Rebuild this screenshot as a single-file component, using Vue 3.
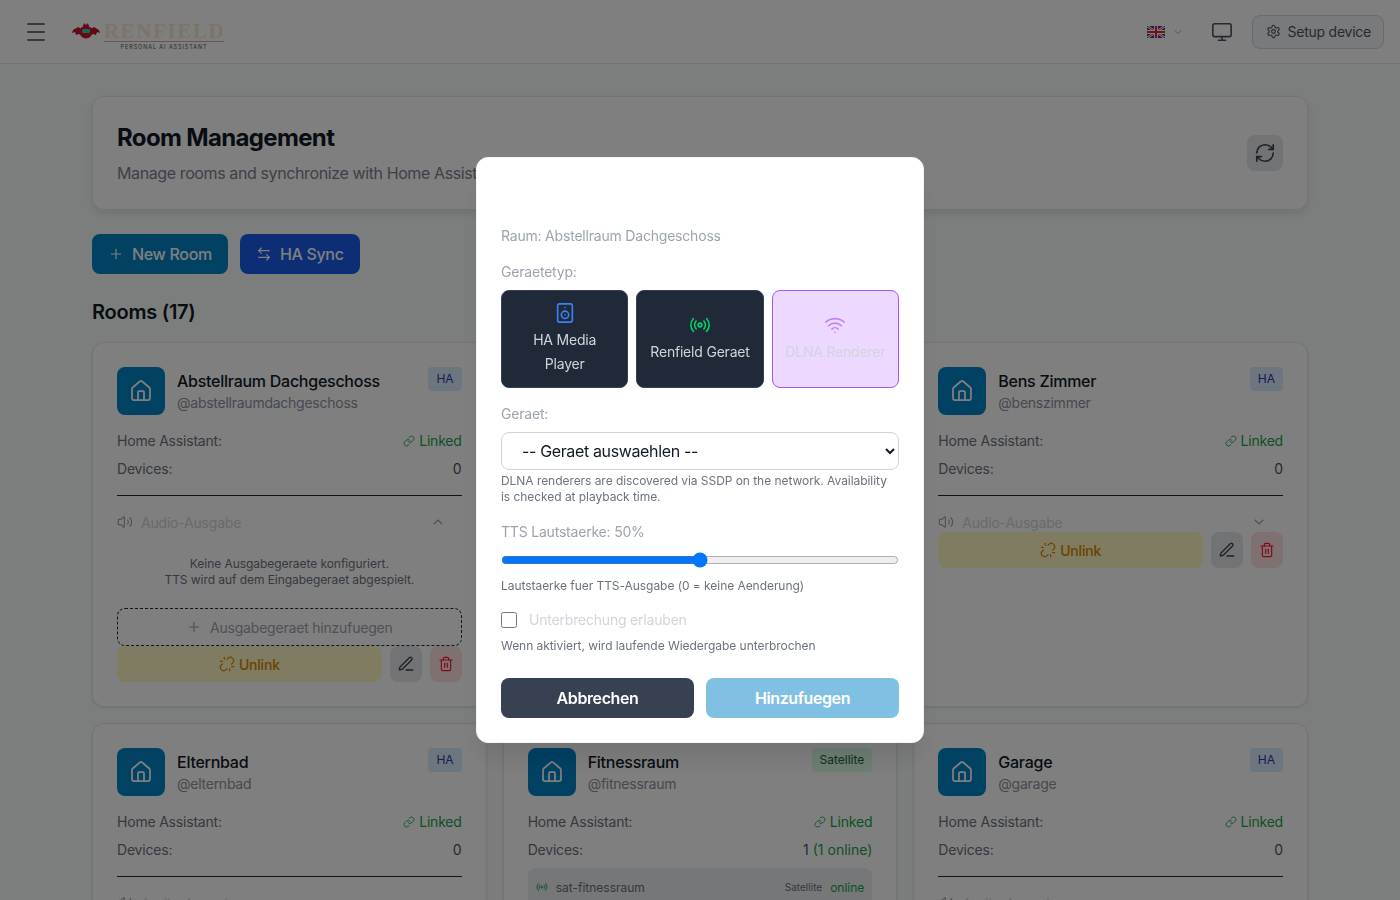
<template>
  <div class="page">
    <header class="topbar">
      <button class="menu-btn" title="Menu">
        <svg width="24" height="24" viewBox="0 0 24 24" fill="none" stroke="currentColor" stroke-width="2" stroke-linecap="round">
          <path d="M4 4h16M4 12h16M4 20h16" />
        </svg>
      </button>
      <div class="logo">
        <svg class="logo-bat" width="28" height="17" viewBox="0 0 28 17">
          <path d="M10 6 6 4 1 7l-1 3 3-1 1 3 3-1 2 1 3-2z" fill="#c0142c" />
          <path d="M18 6l4-2 5 3 1 3-3-1-1 3-3-1-2 1-3-2z" fill="#c0142c" />
          <circle cx="14" cy="9" r="6.5" fill="#d0142c" />
          <path d="M11 3l1-3 2 2 2-2 1 3z" fill="#d0142c" />
          <rect x="10" y="6" width="8" height="4" rx="1.5" fill="#22d3c5" />
        </svg>
        <div class="logo-text">
          <div class="logo-name">RENFIELD</div>
          <div class="logo-sub">PERSONAL AI ASSISTANT</div>
        </div>
      </div>
      <div class="topbar-right">
        <button class="lang-btn">
          <svg width="18" height="12" viewBox="0 0 18 12">
            <rect width="18" height="12" fill="#2a3f9e" />
            <path d="M0 0l18 12M18 0L0 12" stroke="#fff" stroke-width="2.4" />
            <path d="M0 0l18 12M18 0L0 12" stroke="#e0223c" stroke-width="0.9" />
            <path d="M9 0v12M0 6h18" stroke="#fff" stroke-width="4" />
            <path d="M9 0v12M0 6h18" stroke="#e0223c" stroke-width="2.2" />
          </svg>
          <Icon name="chevronDown" :size="12" class="lang-chevron" />
        </button>
        <button class="icon-plain"><Icon name="monitor" :size="22" /></button>
        <button class="setup-btn"><Icon name="settings" :size="15" /> <span>Setup device</span></button>
      </div>
    </header>

    <main class="content">
      <section class="title-card">
        <div>
          <h1>Room Management</h1>
          <p>Manage rooms and synchronize with Home Assistant</p>
        </div>
        <button class="refresh-btn"><Icon name="refresh" :size="22" /></button>
      </section>

      <div class="actions">
        <button class="action action-new"><Icon name="plus" :size="16" /> New Room</button>
        <button class="action action-sync"><Icon name="arrows" :size="16" /> HA Sync</button>
      </div>

      <h2 class="rooms-title">Rooms ({{ roomCount }})</h2>

      <div class="room-grid">
        <article v-for="room in rooms" :key="room.handle" class="room-card">
          <div class="room-head">
            <div class="room-tile"><Icon name="home" :size="24" /></div>
            <div class="room-name">
              <h3>{{ room.name }}</h3>
              <div class="room-handle">@{{ room.handle }}</div>
            </div>
            <span class="badge" :class="room.badge === 'HA' ? 'badge-ha' : 'badge-sat'">{{ room.badge }}</span>
          </div>

          <div class="info-row info-first">
            <span>Home Assistant:</span>
            <span class="linked"><Icon name="link" :size="12" /> Linked</span>
          </div>
          <div class="info-row">
            <span>Devices:</span>
            <span class="count">{{ room.devices }}<em v-if="room.online"> ({{ room.online }} online)</em></span>
          </div>

          <div v-if="room.satellite" class="device-row">
            <Icon name="radio" :size="12" class="device-icon" />
            <span class="device-name">{{ room.satellite }}</span>
            <span class="device-type">Satellite</span>
            <span class="device-state">online</span>
          </div>

          <div class="audio">
            <div class="audio-head">
              <Icon name="volume" :size="16" />
              <span>Audio-Ausgabe</span>
              <Icon :name="room.open ? 'chevronUp' : 'chevronDown'" :size="16" class="audio-chevron" />
            </div>
            <template v-if="room.open">
              <p class="audio-empty">Keine Ausgabegeraete konfiguriert.<br />TTS wird auf dem Eingabegeraet abgespielt.</p>
              <button class="audio-add"><Icon name="plus" :size="16" /> Ausgabegeraet hinzufuegen</button>
            </template>
          </div>

          <div class="room-actions">
            <button class="unlink-btn"><Icon name="unlink" :size="16" /> Unlink</button>
            <button class="square-btn edit-btn"><Icon name="pen" :size="18" /></button>
            <button class="square-btn delete-btn"><Icon name="trash" :size="16" /></button>
          </div>
        </article>
      </div>
    </main>

    <div class="overlay">
      <div class="dialog">
        <div class="dialog-top"></div>
        <p class="field-label room-line">Raum: Abstellraum Dachgeschoss</p>

        <p class="field-label">Geraetetyp:</p>
        <div class="type-grid">
          <button
            v-for="t in deviceTypes"
            :key="t.id"
            class="type-btn"
            :class="{ 'type-active': selectedType === t.id }"
            @click="selectedType = t.id"
          >
            <Icon :name="t.icon" :size="22" :class="t.tone" />
            <span>{{ t.label }}</span>
          </button>
        </div>

        <p class="field-label field-gap">Geraet:</p>
        <select class="device-select">
          <option>-- Geraet auswaehlen --</option>
        </select>
        <p class="help help-select">DLNA renderers are discovered via SSDP on the network. Availability is checked at playback time.</p>

        <p class="field-label volume-label">TTS Lautstaerke: {{ volume }}%</p>
        <input v-model="volume" class="volume" type="range" min="0" max="100" />
        <p class="help help-volume">Lautstaerke fuer TTS-Ausgabe (0 = keine Aenderung)</p>

        <label class="check-row">
          <input v-model="interrupt" type="checkbox" />
          <span>Unterbrechung erlauben</span>
        </label>
        <p class="help help-check">Wenn aktiviert, wird laufende Wiedergabe unterbrochen</p>

        <div class="dialog-actions">
          <button class="btn-cancel">Abbrechen</button>
          <button class="btn-add" disabled>Hinzufuegen</button>
        </div>
      </div>
    </div>
  </div>
</template>

<script setup>
import { h, ref } from 'vue'

const paths = {
  home: ['M15 21v-8a1 1 0 0 0-1-1h-4a1 1 0 0 0-1 1v8', 'M3 10a2 2 0 0 1 .709-1.528l7-6a2 2 0 0 1 2.582 0l7 6A2 2 0 0 1 21 10v9a2 2 0 0 1-2 2H5a2 2 0 0 1-2-2z'],
  plus: ['M5 12h14', 'M12 5v14'],
  arrows: ['M8 3 4 7l4 4', 'M4 7h16', 'm16 21 4-4-4-4', 'M20 17H4'],
  refresh: ['M3 12a9 9 0 0 1 9-9 9.75 9.75 0 0 1 6.74 2.74L21 8', 'M21 3v5h-5', 'M21 12a9 9 0 0 1-9 9 9.75 9.75 0 0 1-6.74-2.74L3 16', 'M8 16H3v5'],
  monitor: ['M4 3h16a2 2 0 0 1 2 2v10a2 2 0 0 1-2 2H4a2 2 0 0 1-2-2V5a2 2 0 0 1 2-2z', 'M8 21h8', 'M12 17v4'],
  settings: ['M12.22 2h-.44a2 2 0 0 0-2 2v.18a2 2 0 0 1-1 1.73l-.43.25a2 2 0 0 1-2 0l-.15-.08a2 2 0 0 0-2.73.73l-.22.38a2 2 0 0 0 .73 2.73l.15.1a2 2 0 0 1 1 1.72v.51a2 2 0 0 1-1 1.74l-.15.09a2 2 0 0 0-.73 2.73l.22.38a2 2 0 0 0 2.73.73l.15-.08a2 2 0 0 1 2 0l.43.25a2 2 0 0 1 1 1.73V20a2 2 0 0 0 2 2h.44a2 2 0 0 0 2-2v-.18a2 2 0 0 1 1-1.73l.43-.25a2 2 0 0 1 2 0l.15.08a2 2 0 0 0 2.73-.73l.22-.39a2 2 0 0 0-.73-2.73l-.15-.08a2 2 0 0 1-1-1.74v-.5a2 2 0 0 1 1-1.74l.15-.09a2 2 0 0 0 .73-2.73l-.22-.38a2 2 0 0 0-2.73-.73l-.15.08a2 2 0 0 1-2 0l-.43-.25a2 2 0 0 1-1-1.73V4a2 2 0 0 0-2-2z', 'M9 12a3 3 0 1 0 6 0a3 3 0 1 0-6 0'],
  chevronDown: ['m6 9 6 6 6-6'],
  chevronUp: ['m18 15-6-6-6 6'],
  link: ['M10 13a5 5 0 0 0 7.54.54l3-3a5 5 0 0 0-7.07-7.07l-1.72 1.71', 'M14 11a5 5 0 0 0-7.54-.54l-3 3a5 5 0 0 0 7.07 7.07l1.71-1.71'],
  unlink: ['m18.84 12.25 1.72-1.71h-.02a5.004 5.004 0 0 0-.12-7.07 5.006 5.006 0 0 0-6.95 0l-1.72 1.71', 'm5.17 11.75-1.71 1.71a5.004 5.004 0 0 0 .12 7.07 5.006 5.006 0 0 0 6.95 0l1.71-1.71', 'M8 2v3', 'M2 8h3', 'M16 19v3', 'M19 16h3'],
  volume: ['M11 4.702a.705.705 0 0 0-1.203-.498L6.413 7.587A1.4 1.4 0 0 1 5.416 8H3a1 1 0 0 0-1 1v6a1 1 0 0 0 1 1h2.416a1.4 1.4 0 0 1 .997.413l3.383 3.384A.705.705 0 0 0 11 19.298z', 'M16 9a5 5 0 0 1 0 6', 'M19.364 18.364a9 9 0 0 0 0-12.728'],
  pen: ['M12 20h9', 'M16.376 3.622a1 1 0 0 1 3.002 3.002L7.368 18.635a2 2 0 0 1-.855.506l-2.872.838a.5.5 0 0 1-.62-.62l.838-2.872a2 2 0 0 1 .506-.854z'],
  trash: ['M10 11v6', 'M14 11v6', 'M19 6v14a2 2 0 0 1-2 2H7a2 2 0 0 1-2-2V6', 'M3 6h18', 'M8 6V4a2 2 0 0 1 2-2h4a2 2 0 0 1 2 2v2'],
  speaker: ['M6 2h12a2 2 0 0 1 2 2v16a2 2 0 0 1-2 2H6a2 2 0 0 1-2-2V4a2 2 0 0 1 2-2z', 'M12 6h.01', 'M8 14a4 4 0 1 0 8 0a4 4 0 1 0-8 0', 'M12 14h.01'],
  radio: ['M4.9 19.1C1 15.2 1 8.8 4.9 4.9', 'M7.8 16.2c-2.3-2.3-2.3-6.1 0-8.5', 'M10 12a2 2 0 1 0 4 0a2 2 0 1 0-4 0', 'M16.2 7.8c2.3 2.3 2.3 6.1 0 8.5', 'M19.1 4.9C23 8.8 23 15.1 19.1 19'],
  wifi: ['M12 20h.01', 'M2 8.82a15 15 0 0 1 20 0', 'M5 12.859a10 10 0 0 1 14 0', 'M8.5 16.429a5 5 0 0 1 7 0']
}

// kleine Icon-Komponente, damit das Template lesbar bleibt
const Icon = (props) =>
  h(
    'svg',
    {
      width: props.size,
      height: props.size,
      viewBox: '0 0 24 24',
      fill: 'none',
      stroke: 'currentColor',
      'stroke-width': 1.75,
      'stroke-linecap': 'round',
      'stroke-linejoin': 'round'
    },
    paths[props.name].map((d) => h('path', { d }))
  )
Icon.props = ['name', 'size']

const roomCount = 17

const rooms = [
  { name: 'Abstellraum Dachgeschoss', handle: 'abstellraumdachgeschoss', badge: 'HA', devices: 0, open: true },
  { name: 'Arbeitszimmer', handle: 'arbeitszimmer', badge: 'HA', devices: 0 },
  { name: 'Bens Zimmer', handle: 'benszimmer', badge: 'HA', devices: 0 },
  { name: 'Elternbad', handle: 'elternbad', badge: 'HA', devices: 0 },
  { name: 'Fitnessraum', handle: 'fitnessraum', badge: 'Satellite', devices: 1, online: 1, satellite: 'sat-fitnessraum' },
  { name: 'Garage', handle: 'garage', badge: 'HA', devices: 0 }
]

const deviceTypes = [
  { id: 'ha', label: 'HA Media Player', icon: 'speaker', tone: 'tone-blue' },
  { id: 'renfield', label: 'Renfield Geraet', icon: 'radio', tone: 'tone-green' },
  { id: 'dlna', label: 'DLNA Renderer', icon: 'wifi', tone: 'tone-purple' }
]

const selectedType = ref('dlna')
const volume = ref(50)
const interrupt = ref(false)
</script>

<style scoped>
.page {
  min-height: 100vh;
  background: #f9fdfb;
  font-family: Inter, "Liberation Sans", sans-serif;
  color: #111827;
}

button {
  font-family: inherit;
  cursor: pointer;
  border: none;
  background: none;
}

p,
h1,
h2,
h3 {
  margin: 0;
}

/* Kopfzeile */
.topbar {
  height: 64px;
  box-sizing: border-box;
  display: flex;
  align-items: center;
  padding: 0 16px 0 24px;
  background: #fff;
  border-bottom: 1px solid #e5e7eb;
}

.menu-btn {
  width: 24px;
  height: 24px;
  padding: 0;
  color: #6b7280;
}

.logo {
  display: flex;
  align-items: center;
  margin-left: 24px;
}

.logo-text {
  margin-left: 4px;
  margin-top: 8px;
  width: 120px;
}

.logo-name {
  font-family: "Liberation Serif", serif;
  font-weight: 700;
  font-size: 21px;
  line-height: 20px;
  letter-spacing: 1.6px;
  color: #f6ebd2;
  border-bottom: 1.5px solid #d8a8a8;
  white-space: nowrap;
}

.logo-sub {
  font-size: 5.5px;
  line-height: 8px;
  letter-spacing: 0.9px;
  color: #4b5563;
  text-align: center;
  white-space: nowrap;
  margin-top: 1px;
}

.topbar-right {
  margin-left: auto;
  display: flex;
  align-items: center;
}

.lang-btn {
  display: flex;
  align-items: center;
  gap: 7px;
  padding: 0;
}

.lang-chevron {
  color: #9ca3af;
}

.icon-plain {
  margin-left: 27px;
  padding: 0;
  display: flex;
  color: #4b5563;
}

.setup-btn {
  margin-left: 19px;
  height: 34px;
  box-sizing: border-box;
  padding: 0 12px 0 13px;
  display: flex;
  align-items: center;
  gap: 7px;
  font-size: 14px;
  letter-spacing: -0.25px;
  color: #4b5563;
  background: #f3f4f6;
  border: 1px solid #d1d5db;
  border-radius: 8px;
}

/* Inhalt */
.content {
  width: 1216px;
  margin: 0 auto;
  padding-top: 32px;
}

.title-card {
  display: flex;
  align-items: center;
  justify-content: space-between;
  height: 114px;
  box-sizing: border-box;
  padding: 0 24px;
  background: #fff;
  border: 1px solid #e5e7eb;
  border-radius: 12px;
  box-shadow: 0 4px 10px rgba(0, 0, 0, 0.1);
}

.title-card h1 {
  font-size: 24px;
  line-height: 32px;
  font-weight: 700;
  letter-spacing: -0.65px;
  padding-top: 1px;
}

.title-card p {
  margin-top: 7px;
  font-size: 16px;
  line-height: 24px;
  letter-spacing: -0.39px;
  color: #7a8190;
  white-space: nowrap;
}

.refresh-btn {
  width: 36px;
  height: 36px;
  padding: 0;
  display: flex;
  align-items: center;
  justify-content: center;
  background: #e5e7eb;
  border-radius: 8px;
  color: #374151;
}

.actions {
  display: flex;
  gap: 12px;
  margin-top: 24px;
}

.action {
  height: 40px;
  padding: 0 16px;
  display: flex;
  align-items: center;
  gap: 8px;
  font-size: 16px;
  font-weight: 500;
  letter-spacing: -0.32px;
  color: #fff;
  border-radius: 8px;
}

.action-new {
  background: #0284c7;
}

.action-sync {
  background: #1a5ae8;
}

.rooms-title {
  margin-top: 24px;
  font-size: 20px;
  line-height: 28px;
  font-weight: 600;
  letter-spacing: -0.25px;
}

.room-grid {
  display: grid;
  grid-template-columns: repeat(3, 1fr);
  gap: 16px;
  margin-top: 16px;
}

.room-card {
  padding: 24px;
  background: #fff;
  border: 1px solid #e5e7eb;
  border-radius: 12px;
  box-shadow: 0 1px 3px rgba(0, 0, 0, 0.1);
}

.room-head {
  display: flex;
  align-items: center;
  gap: 12px;
}

.room-tile {
  width: 48px;
  height: 48px;
  flex: none;
  display: flex;
  align-items: center;
  justify-content: center;
  color: #fff;
  background: #0284c7;
  border-radius: 8px;
}

.room-name {
  flex: 1;
  min-width: 0;
}

.room-name h3 {
  font-size: 16px;
  line-height: 24px;
  font-weight: 500;
  letter-spacing: -0.26px;
}

.room-handle {
  font-size: 14px;
  line-height: 20px;
  letter-spacing: -0.25px;
  color: #8b92a0;
}

.badge {
  align-self: flex-start;
  height: 24px;
  padding: 0 8px;
  font-size: 12px;
  line-height: 24px;
  font-weight: 400;
  border-radius: 4px;
}

.badge-ha {
  background: #dbeafe;
  color: #1e40af;
}

.badge-sat {
  background: #dcfce7;
  color: #166534;
}

.info-row {
  display: flex;
  justify-content: space-between;
  margin-top: 8px;
  font-size: 14px;
  line-height: 20px;
  letter-spacing: -0.2px;
  color: #6b7280;
}

.info-first {
  margin-top: 16px;
}

.linked {
  display: flex;
  align-items: center;
  gap: 4px;
  color: #16a34a;
}

.count {
  color: #4b5563;
  letter-spacing: 0;
}

.count em {
  font-style: normal;
  color: #16a34a;
}

.device-row {
  display: flex;
  align-items: center;
  height: 38px;
  margin-top: 8px;
  padding: 0 8px;
  font-size: 12px;
  background: #eceef1;
  border-radius: 8px;
}

.device-icon {
  color: #16a34a;
}

.device-name {
  margin-left: 8px;
  flex: 1;
  color: #6b7280;
}

.device-type {
  font-size: 10px;
  color: #6b7280;
}

.device-state {
  margin-left: 8px;
  color: #16a34a;
}

.audio {
  margin-top: 16px;
  padding-top: 16px;
  border-top: 1px solid #1f2937;
}

.audio-head {
  display: flex;
  align-items: center;
  gap: 8px;
  height: 20px;
  font-size: 14px;
  letter-spacing: -0.2px;
  color: #d1d5db;
}

.audio-head svg {
  color: #9ca3af;
}

.audio-chevron {
  margin-left: auto;
  margin-right: 16px;
}

.audio-empty {
  padding: 24px 0 20px;
  font-size: 12px;
  line-height: 16px;
  letter-spacing: -0.06px;
  color: #6b7280;
  text-align: center;
}

.audio-add {
  width: 100%;
  height: 38px;
  display: flex;
  align-items: center;
  justify-content: center;
  gap: 8px;
  font-size: 14px;
  letter-spacing: -0.2px;
  color: #9ca3af;
  border: 1px dashed #1f2937;
  border-radius: 8px;
}

.room-actions {
  display: flex;
  gap: 8px;
}

.unlink-btn {
  flex: 1;
  height: 36px;
  display: flex;
  align-items: center;
  justify-content: center;
  gap: 4px;
  font-size: 14px;
  font-weight: 500;
  letter-spacing: -0.2px;
  color: #d98400;
  background: #fef9c3;
  border-radius: 8px;
}

.square-btn {
  width: 32px;
  height: 36px;
  padding: 0;
  display: flex;
  align-items: center;
  justify-content: center;
  border-radius: 8px;
}

.edit-btn {
  background: #e5e7eb;
  color: #374151;
}

.delete-btn {
  background: #fee2e2;
  color: #ff1230;
}

/* Dialog */
.overlay {
  position: fixed;
  inset: 0;
  display: flex;
  align-items: center;
  justify-content: center;
  background: rgba(0, 0, 0, 0.5);
  backdrop-filter: blur(0.6px);
}

.dialog {
  width: 448px;
  height: 586px;
  box-sizing: border-box;
  padding: 24px;
  background: #fff;
  border: 1px solid #f3f4f6;
  border-radius: 12px;
  box-shadow: 0 20px 25px -5px rgba(0, 0, 0, 0.1);
}

.dialog-top {
  height: 44px;
}

.field-label {
  font-size: 14px;
  line-height: 20px;
  letter-spacing: -0.2px;
  color: #9ca3af;
}

.room-line {
  margin-bottom: 16px;
}

.type-grid {
  display: grid;
  grid-template-columns: repeat(3, 1fr);
  gap: 8px;
  margin-top: 8px;
  height: 98px;
}

.type-btn {
  display: flex;
  flex-direction: column;
  align-items: center;
  justify-content: center;
  gap: 4px;
  padding: 0 12px;
  font-size: 14px;
  line-height: 24px;
  letter-spacing: -0.2px;
  text-align: center;
  color: #d1d5db;
  background: #1f2937;
  border: 1px solid #374151;
  border-radius: 8px;
}

.type-active {
  background: #edd8ff;
  border-color: #a855f7;
}

.tone-blue {
  color: #3b82f6;
}

.tone-green {
  color: #00d166;
}

.tone-purple {
  color: #c084fc;
}

.field-gap {
  margin-top: 16px;
}

.device-select {
  display: block;
  width: 100%;
  height: 38px;
  margin-top: 8px;
  padding: 0 16px;
  font-family: inherit;
  font-size: 16px;
  letter-spacing: -0.36px;
  color: #111827;
  background: #fff;
  border: 1px solid #d1d5db;
  border-radius: 8px;
}

.help {
  font-size: 12px;
  line-height: 16px;
  letter-spacing: -0.05px;
  color: #6b7280;
}

.help-select {
  margin-top: 3px;
}

.volume-label {
  margin-top: 17px;
}

.volume {
  display: block;
  width: 100%;
  height: 16px;
  margin: 10px 0 0;
}

.help-volume {
  margin-top: 10px;
}

.check-row {
  display: flex;
  align-items: center;
  gap: 12px;
  margin-top: 18px;
  font-size: 14px;
  line-height: 16px;
  letter-spacing: -0.2px;
  color: #d1d5db;
}

.check-row input {
  width: 16px;
  height: 16px;
  margin: 0;
}

.help-check {
  margin-top: 10px;
}

.dialog-actions {
  display: flex;
  gap: 12px;
  margin-top: 24px;
}

.dialog-actions button {
  flex: 1;
  height: 40px;
  font-size: 16px;
  font-weight: 600;
  letter-spacing: -0.4px;
  color: #fff;
  border-radius: 8px;
}

.btn-cancel {
  background: #374151;
}

.btn-add {
  background: #0284c7;
  opacity: 0.5;
}
</style>

<style>
html,
body {
  overflow: hidden;
}
</style>
